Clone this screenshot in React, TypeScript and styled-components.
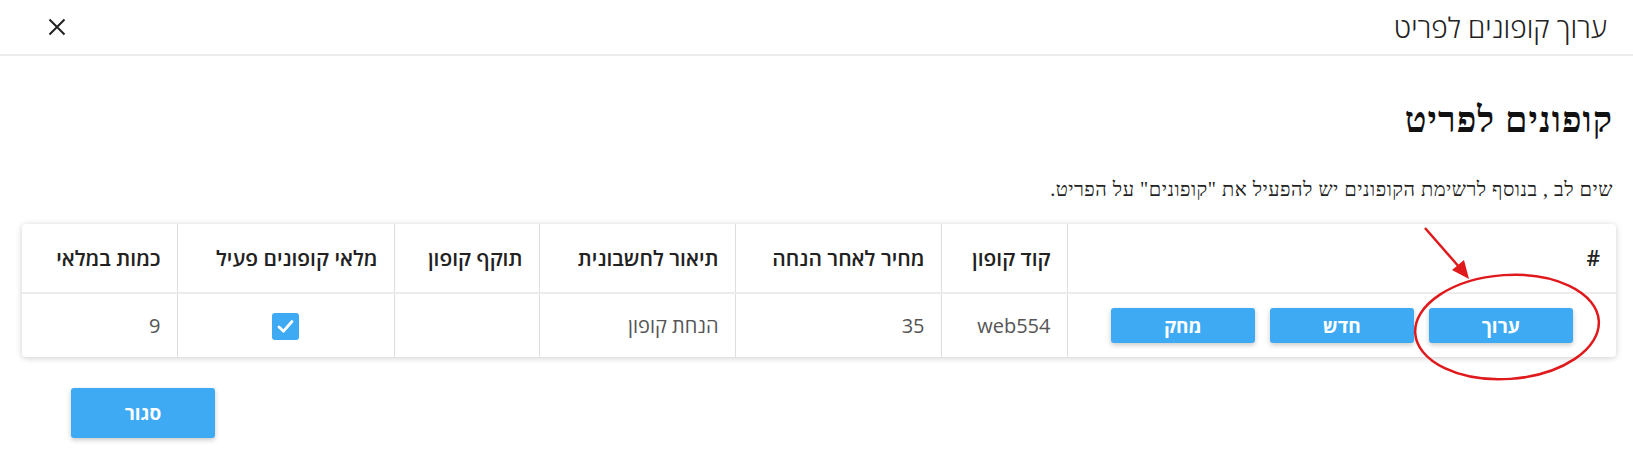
import React from "react";
import styled, { createGlobalStyle } from "styled-components";

const Global = createGlobalStyle`
  html, body { margin: 0; padding: 0; background: #fff; }
  body { font-family: "Open Sans", "Liberation Sans", sans-serif; direction: rtl; color: #222; }
  * { box-sizing: border-box; }
`;

const Page = styled.div`
  position: relative;
  width: 1633px;
  height: 451px;
  overflow: hidden;
  background: #fff;
`;

const Header = styled.header`
  height: 56px;
  display: flex;
  align-items: center;
  justify-content: space-between;
  padding: 0 26px 0 47px;
  border-bottom: 2px solid #ececec;
`;

const Title = styled.h1`
  margin: 0;
  font-family: "Open Sans", "Liberation Sans", sans-serif;
  font-weight: 300;
  font-size: 28px;
  color: #222;
`;

const CloseX = styled.button`
  display: flex;
  align-items: center;
  justify-content: center;
  width: 20px;
  height: 20px;
  padding: 0;
  border: 0;
  background: none;
  color: #222;
`;

const Body = styled.main`
  padding: 0 17px 0 22px;
`;

const Heading = styled.h2`
  margin: 44px 3px 0 0;
  font-family: "Liberation Serif", serif;
  font-weight: 700;
  font-size: 36px;
  line-height: 40px;
  letter-spacing: 1px;
  color: #111;
`;

const Note = styled.p`
  margin: 37px 3px 0 0;
  font-family: "Liberation Serif", serif;
  font-size: 20px;
  line-height: 24px;
  letter-spacing: 0.5px;
  color: #222;
`;

const Card = styled.div`
  margin-top: 23px;
  border-radius: 4px;
  box-shadow: 0 1px 6px rgba(0, 0, 0, 0.2);
  overflow: hidden;
`;

const Table = styled.table`
  width: 100%;
  border-collapse: collapse;
  table-layout: fixed;
`;

const Th = styled.th`
  height: 69px;
  padding: 0 16px;
  text-align: right;
  font-family: "Open Sans", "Liberation Sans", sans-serif;
  font-weight: 600;
  font-size: 21px;
  color: #222;
  border-left: 1px solid #dedede;
  border-bottom: 2px solid #ececec;
  &:last-child { border-left: 0; }
`;

const Td = styled.td<{ $center?: boolean }>`
  height: 64px;
  padding: 0 16px;
  text-align: ${(p) => (p.$center ? "center" : "right")};
  font-family: "Open Sans", "Liberation Sans", sans-serif;
  font-size: 20px;
  color: #555;
  border-left: 1px solid #dedede;
  vertical-align: middle;
  &:last-child { border-left: 0; }
`;

const Actions = styled.div`
  display: flex;
  justify-content: center;
  gap: 15px;
`;

const Button = styled.button<{ $w?: number; $h?: number }>`
  width: ${(p) => p.$w ?? 144}px;
  height: ${(p) => p.$h ?? 35}px;
  border: 0;
  border-radius: 3px;
  background: #3eaaf4;
  color: #fff;
  font-family: "Open Sans", "Liberation Sans", sans-serif;
  font-weight: 700;
  font-size: 19px;
  box-shadow: 0 2px 5px rgba(0, 0, 0, 0.22);
  cursor: pointer;
`;

const Check = styled.span`
  display: inline-flex;
  align-items: center;
  justify-content: center;
  width: 27px;
  height: 27px;
  border-radius: 3px;
  background: #3eaaf4;
  vertical-align: middle;
`;

const Footer = styled.div`
  display: flex;
  justify-content: flex-end;
  padding-left: 49px;
  margin-top: 31px;
`;

const Annotation = styled.svg`
  position: absolute;
  left: 0;
  top: 0;
  pointer-events: none;
`;

const cols = [549, 126, 206, 196, 145, 217, 155];

export default function App() {
  return (
    <Page>
      <Global />
      <Header>
        <Title>ערוך קופונים לפריט</Title>
        <CloseX aria-label="close">
          <svg width="18" height="18" viewBox="0 0 18 18">
            <path d="M1.5 1.5 L16.5 16.5 M16.5 1.5 L1.5 16.5" stroke="#222" strokeWidth="2" />
          </svg>
        </CloseX>
      </Header>
      <Body>
        <Heading>קופונים לפריט</Heading>
        <Note>שים לב , בנוסף לרשימת הקופונים יש להפעיל את "קופונים" על הפריט.</Note>
        <Card>
          <Table>
            <colgroup>
              {cols.map((w, i) => (
                <col key={i} style={{ width: w }} />
              ))}
            </colgroup>
            <thead>
              <tr>
                <Th>#</Th>
                <Th>קוד קופון</Th>
                <Th>מחיר לאחר הנחה</Th>
                <Th>תיאור לחשבונית</Th>
                <Th>תוקף קופון</Th>
                <Th>מלאי קופונים פעיל</Th>
                <Th>כמות במלאי</Th>
              </tr>
            </thead>
            <tbody>
              <tr>
                <Td>
                  <Actions>
                    <Button>ערוך</Button>
                    <Button>חדש</Button>
                    <Button>מחק</Button>
                  </Actions>
                </Td>
                <Td>web554</Td>
                <Td>35</Td>
                <Td>הנחת קופון</Td>
                <Td></Td>
                <Td $center>
                  <Check>
                    <svg width="21" height="21" viewBox="0 0 21 21">
                      <path d="M4 11 L8.5 15.2 L17 5.5" fill="none" stroke="#fff" strokeWidth="2.8" strokeLinecap="round" strokeLinejoin="round" />
                    </svg>
                  </Check>
                </Td>
                <Td>9</Td>
              </tr>
            </tbody>
          </Table>
        </Card>
        <Footer>
          <Button $w={144} $h={50}>סגור</Button>
        </Footer>
      </Body>
      <Annotation width="1633" height="451" viewBox="0 0 1633 451">
        <ellipse cx="1507" cy="327" rx="92" ry="52" fill="none" stroke="#e0191c" strokeWidth="2.5" transform="rotate(-4 1507 327)" />
        <line x1="1425" y1="228" x2="1460" y2="268" stroke="#e0191c" strokeWidth="2.5" />
        <polygon points="1469,279 1452,270 1464,260" fill="#e0191c" />
      </Annotation>
    </Page>
  );
}
